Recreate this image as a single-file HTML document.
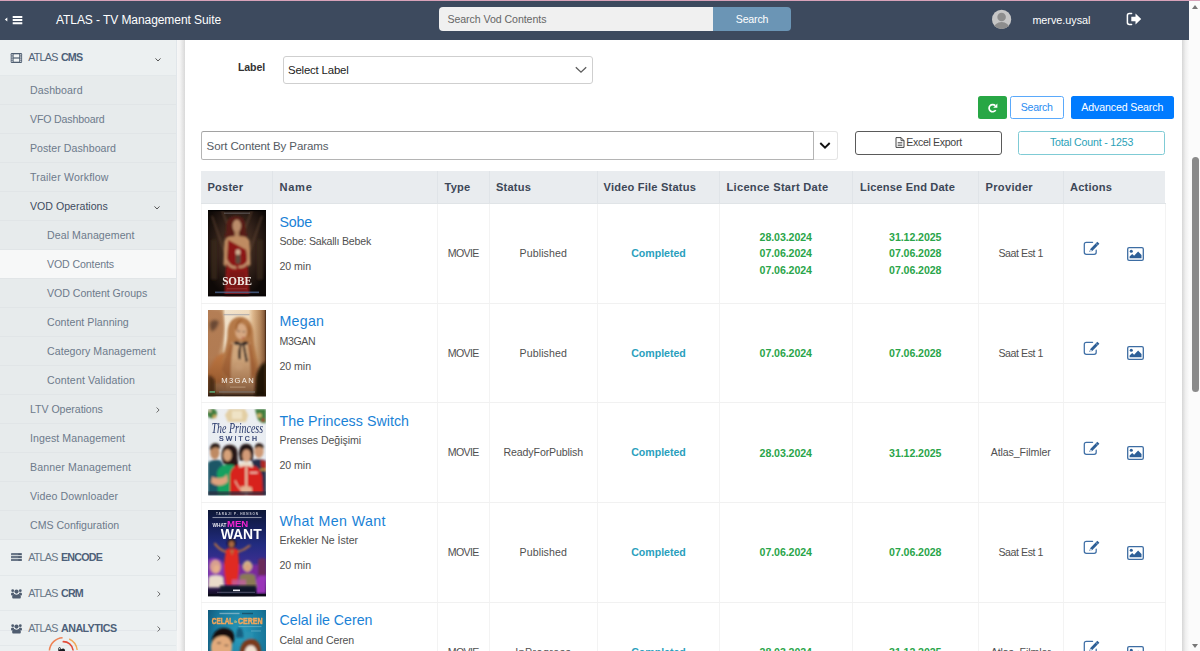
<!DOCTYPE html>
<html lang="en">
<head>
<meta charset="utf-8">
<title>ATLAS - TV Management Suite</title>
<style>
*{box-sizing:border-box;}
html,body{margin:0;padding:0;width:1200px;height:651px;overflow:hidden;background:#fff;
  font-family:"Liberation Sans",sans-serif;color:#444;}
.abs{position:absolute;}
#topline{position:absolute;left:0;top:0;width:1200px;height:1px;background:#d8a2b9;z-index:20;}
#hdr{position:absolute;left:0;top:0;width:1189px;height:40px;background:#3d4a5e;color:#fff;z-index:10;}
#hdr .title{position:absolute;left:56px;top:11px;font-size:12px;line-height:18px;white-space:nowrap;}
#hdr .sin{position:absolute;left:439px;top:7px;width:274px;height:24px;background:#f0f0f0;border-radius:4px 0 0 4px;
  color:#666;font-size:10.6px;line-height:24px;padding-left:8.4px;white-space:nowrap;}
#hdr .sbtn{position:absolute;left:713px;top:7px;width:78px;height:24px;background:#6b95b5;border-radius:0 4px 4px 0;
  color:#fff;font-size:10.6px;line-height:24px;text-align:center;}
#hdr .user{position:absolute;left:1032.4px;top:12px;font-size:10.8px;line-height:16px;white-space:nowrap;}
#side{position:absolute;left:0;top:40px;width:177px;height:611px;background:#ecf0f1;overflow:hidden;}
#sbr{position:absolute;left:176px;top:0;width:1px;height:590px;background:#e1e6ea;z-index:3;}
#menu{position:absolute;left:0;top:0;width:176px;height:611px;overflow:hidden;}
.top.h36{height:36px;}
#sfoot{position:absolute;left:0;top:590px;width:177px;height:21px;pointer-events:none;}
#sfl{position:absolute;left:0;top:590px;width:177px;height:1px;background:#e3e7ea;}
#gap{position:absolute;left:177px;top:40px;width:8px;height:611px;background:linear-gradient(90deg,#f7f7f7 0%,#f3f3f3 40%,#d9d9d9 100%);}
#main{position:absolute;left:185px;top:40px;width:997px;height:611px;background:#fff;overflow:hidden;}
#rsh{position:absolute;left:1182px;top:40px;width:7px;height:611px;background:linear-gradient(90deg,#d6d6d6 0%,#efefef 50%,#fafafa 100%);}
#sbar{position:absolute;left:1189px;top:1px;width:11px;height:650px;background:#fbfbfb;}
#sbar .thumb{position:absolute;left:3px;top:156px;width:7px;height:235px;border-radius:3.5px;background:#8a8a8a;}
#sbar .up{position:absolute;left:3px;top:4px;width:0;height:0;border-left:3px solid transparent;border-right:3px solid transparent;border-bottom:4px solid #777;}
#sbar .dn{position:absolute;left:3px;top:643px;width:0;height:0;border-left:3px solid transparent;border-right:3px solid transparent;border-top:4px solid #777;}

/* sidebar */
.top{position:relative;height:35px;background:transparent;border-bottom:1px solid #e3e8ea;color:#586a80;font-size:10.7px;line-height:34px;white-space:nowrap;}
.top .ta{position:absolute;left:28.3px;top:0;color:#687686;}
.top #aCMS{color:#506076;}
.top .tb{position:absolute;left:61px;top:0;color:#4d6079;}
.sub{position:relative;height:29px;background:#e7ebec;border-bottom:1px solid #e1e5e7;color:#6d7a8b;font-size:10.6px;line-height:28.6px;white-space:nowrap;}
.sub .tx{position:absolute;left:30px;top:0;}
.sub.l2 .tx{left:47px;}
.sub.sel{background:#f7f8f8;}
.sub.dark{color:#3f4c5f;}
.chev{position:absolute;left:154px;top:0;width:8px;height:100%;}

/* main content */
#ct{position:absolute;left:0;top:0;width:1182px;height:651px;overflow:hidden;z-index:5;}
.t{position:absolute;white-space:nowrap;line-height:14px;font-size:10.6px;}
.lbl{left:238px;top:60px;font-weight:bold;color:#333;font-size:10.6px;}
.selbox{position:absolute;left:283px;top:55.7px;width:309.6px;height:28.2px;border:1px solid #cfcfcf;border-radius:3px;background:#fff;}
.selbox .t{left:4px;top:6px;font-size:11.4px;color:#222;}
.btn{position:absolute;top:96px;height:23px;border-radius:2.5px;font-size:10.6px;line-height:22px;text-align:center;white-space:nowrap;}
.b-g{left:978px;width:29px;background:#28a745;}
.b-s{left:1010px;width:53.5px;border:1px solid #5aa9fb;color:#2a8df2;background:#fff;line-height:20px;}
.b-a{left:1071px;width:102.5px;background:#007bff;color:#fff;}
.sortin{position:absolute;left:201px;top:130.6px;width:612.5px;height:29px;border:1px solid #b4b4b4;border-top-color:#a2a2a2;border-radius:2.5px 0 0 2.5px;background:#fff;}
.sortin .t{left:4.6px;top:7px;font-size:11.5px;color:#555b63;}
.sortbtn{position:absolute;left:813.5px;top:130.6px;width:24.5px;height:29px;border:1px solid #e4e4e4;border-left:none;border-radius:0 3px 3px 0;background:#fff;}
.xls{position:absolute;left:855px;top:131px;width:146.5px;height:24px;border:1px solid #5a5a5a;border-radius:3px;background:#fff;color:#444;font-size:10.6px;line-height:21px;text-align:center;white-space:nowrap;}
.tot{position:absolute;left:1018px;top:131px;width:147px;height:24px;border:1px solid #7fcbd5;border-radius:2.5px;background:#fff;color:#2aa1b7;font-size:10.6px;line-height:21px;text-align:center;white-space:nowrap;}
table#tb{position:absolute;left:201px;top:171px;width:964px;border-collapse:collapse;table-layout:fixed;}
#tb th{height:32.5px;background:#e9ecef;color:#3d4757;font-size:11.1px;font-weight:bold;text-align:left;padding:0 0 1px 6.5px;border-right:1px solid #e0e4e8;border-bottom:1px solid #e0e4e7;white-space:nowrap;vertical-align:middle;}
#tb th:last-child{border-right:none;}
#tb th:nth-child(5){padding-left:5.5px;}
#tb th:nth-child(7){padding-left:7.5px;}
#tb td{height:99.7px;padding:0 0 1px 0;border-right:1px solid #f3f3f3;border-bottom:1px solid #f1f1f1;font-size:10.6px;color:#505050;text-align:center;vertical-align:middle;position:relative;white-space:nowrap;}
#tb td:first-child{box-shadow:inset 1px 0 0 #f6f6f6;}
#tb td.nm{text-align:left;vertical-align:top;}
#tb td.nm a{position:absolute;left:6.5px;top:8.5px;font-size:14.2px;line-height:18px;color:#1a82d6;text-decoration:none;}
#tb td.nm .s1{position:absolute;left:6.5px;top:30px;line-height:14px;}
#tb td.nm .s2{position:absolute;left:6.5px;top:55px;line-height:14px;}
#tb td.vs{color:#2a9fbd;font-weight:bold;}
#tb td.dt{color:#2aa54a;font-weight:bold;line-height:16.6px;padding-top:1.2px;}
.pst{position:absolute;left:7px;top:6.4px;width:58px;height:86.5px;display:block;}
#r1 .pst{top:6.4px;}#r2 .pst{top:6.35px;}#r3 .pst{top:6.1px;}#r4 .pst{top:7px;}#r5 .pst{top:7.3px;}
.ic1{position:absolute;left:19.5px;top:37.2px;width:17px;height:15px;}
.ic2{position:absolute;left:63px;top:42.8px;width:17px;height:14px;}
/*FIT*/
#hdr .title{letter-spacing:-0.073px;}
#hdr .sin{letter-spacing:-0.059px;}
#hdr .sbtn{letter-spacing:-0.196px;}
#hdr .user{letter-spacing:-0.018px;}
#m1{letter-spacing:0.097px;}
#m2{letter-spacing:-0.157px;}
#m3{letter-spacing:0.038px;}
#m4{letter-spacing:0.173px;}
#m5{letter-spacing:0.005px;}
#m6{letter-spacing:0.068px;}
#m7{letter-spacing:-0.109px;}
#m8{letter-spacing:-0.027px;}
#m9{letter-spacing:0.032px;}
#m10{letter-spacing:0.049px;}
#m11{letter-spacing:0.122px;}
#m12{letter-spacing:-0.043px;}
#m13{letter-spacing:0.080px;}
#m14{letter-spacing:0.120px;}
#m15{letter-spacing:0.113px;}
#m16{letter-spacing:-0.018px;}
#aCMS{letter-spacing:-0.776px;}
#aENCODE{letter-spacing:-0.776px;}
#aCRM{letter-spacing:-0.776px;}
#aANALYTICS{letter-spacing:-0.776px;}
#bCMS{letter-spacing:-0.850px;}
#bENCODE{letter-spacing:-0.756px;}
#bCRM{letter-spacing:-0.781px;}
#bANALYTICS{letter-spacing:-0.521px;}
.lbl{letter-spacing:-0.134px;}
.selbox .t{letter-spacing:-0.175px;}
.sortin .t{letter-spacing:-0.100px;}
.b-s{letter-spacing:-0.263px;}
.b-a{letter-spacing:-0.109px;}
.xls span{letter-spacing:-0.331px;}
.tot{letter-spacing:-0.188px;}
#tb th:nth-child(1){letter-spacing:0.203px;}
#tb th:nth-child(2){letter-spacing:0.695px;}
#tb th:nth-child(3){letter-spacing:0.230px;}
#tb th:nth-child(4){letter-spacing:0.182px;}
#tb th:nth-child(5){letter-spacing:0.195px;}
#tb th:nth-child(6){letter-spacing:0.288px;}
#tb th:nth-child(7){letter-spacing:0.157px;}
#tb th:nth-child(8){letter-spacing:0.311px;}
#tb th:nth-child(9){letter-spacing:0.188px;}
#r1 a{letter-spacing:-0.160px;}
#r2 a{letter-spacing:0.262px;}
#r3 a{letter-spacing:0.051px;}
#r4 a{letter-spacing:0.393px;}
#r5 a{letter-spacing:-0.004px;}
#r1 .s1{letter-spacing:-0.206px;}
#r2 .s1{letter-spacing:-0.378px;}
#r3 .s1{letter-spacing:-0.052px;}
#r4 .s1{letter-spacing:-0.017px;}
#r5 .s1{letter-spacing:-0.131px;}
#tb .s2{letter-spacing:-0.049px;}
#tb td:nth-child(3){letter-spacing:-0.628px;}
#r1 td:nth-child(4){letter-spacing:0.085px;}
#r2 td:nth-child(4){letter-spacing:0.085px;}
#r4 td:nth-child(4){letter-spacing:0.085px;}
#r3 td:nth-child(4){letter-spacing:-0.118px;}
#r5 td:nth-child(4){letter-spacing:0.477px;}
#tb td.vs{letter-spacing:-0.028px;}
#tb td.dt{letter-spacing:-0.073px;}
#r1 td:nth-child(8){letter-spacing:-0.419px;}
#r2 td:nth-child(8){letter-spacing:-0.419px;}
#r4 td:nth-child(8){letter-spacing:-0.419px;}
#r3 td:nth-child(8){letter-spacing:-0.095px;}
#r5 td:nth-child(8){letter-spacing:-0.095px;}
/*ENDFIT*/
</style>
</head>
<body>
<svg width="0" height="0" style="position:absolute">
<defs>
<!--POSTERS-->
<filter id="bl1" x="-10%" y="-10%" width="120%" height="120%"><feGaussianBlur stdDeviation="0.9"/></filter>
<filter id="bl2" x="-10%" y="-10%" width="120%" height="120%"><feGaussianBlur stdDeviation="1.8"/></filter>
<filter id="bl0" x="-10%" y="-10%" width="120%" height="120%"><feGaussianBlur stdDeviation="0.45"/></filter>
<radialGradient id="g1a" cx="50%" cy="42%" r="60%"><stop offset="0" stop-color="#5a3f2b"/><stop offset=".55" stop-color="#33221a"/><stop offset="1" stop-color="#0e0907"/></radialGradient>
<clipPath id="pc"><rect x="0" y="0" width="58" height="87"/></clipPath>
<symbol id="p1" viewBox="0 0 58 87">
  <g clip-path="url(#pc)">
  <rect width="58" height="87" fill="url(#g1a)"/>
  <g filter="url(#bl1)">
    <path d="M14 0L25 30M44 0L33 30M4 6L17 44M54 6L41 44" stroke="#6b4c36" stroke-width="1.800" opacity=".55"/>
    <rect x="3" y="30" width="6" height="40" fill="#3b2a20" opacity=".7"/><rect x="49" y="30" width="6" height="40" fill="#3b2a20" opacity=".7"/>
    <path d="M28 6c-6 0-9.500 4-9.500 10 0 5-1 9-2 12l4 2h15l4-2c-1-3-2-7-2-12 0-6-3.500-10-9.500-10z" fill="#581b14"/>
    <ellipse cx="28.800" cy="16" rx="4.300" ry="6.400" fill="#ba8c6a"/>
    <rect x="26.500" y="21" width="4.500" height="7" fill="#b0835f"/>
    <path d="M16.500 31c1.500-3 5-4.500 9-4.500h7c4 0 7.500 1.500 9 4.500l1 24-3 2-1.500-18-1 20H21l-1-20-1.500 18-3-2z" fill="#bf8c62"/>
    <path d="M20 30l18 10 2 20 1.500 27h-25L18 60l1.500-16z" fill="#8c1719"/>
    <path d="M21 62h16l2 25H19z" fill="#7c1316"/>
    <ellipse cx="30" cy="42.500" rx="2.500" ry="3.100" fill="#cfae92"/>
    <rect x="27.600" y="45" width="5" height="9" rx="1.500" fill="#5f4c3e"/>
    <path d="M18 50c2 5 6 8 10.500 8M41 50c-2 5-6 8-10.500 7" stroke="#c3946e" stroke-width="2.400" fill="none"/>
  </g>
  <rect x="0" y="0" width="58" height="1.200" fill="#050302"/>
  <rect x="0" y="84.500" width="58" height="2.500" fill="#0a0605" opacity=".9"/>
  <g filter="url(#bl0)">
  <text x="29" y="75.300" text-anchor="middle" font-family="Liberation Serif,serif" font-weight="bold" font-size="13.400" fill="#efe9e4" textLength="29.700" lengthAdjust="spacingAndGlyphs">SOBE</text>
  <rect x="16" y="2.600" width="26" height="1.200" fill="#8f9098" opacity=".45"/>
  <rect x="7" y="82" width="44" height="1.600" fill="#4f6a96" opacity=".75"/>
  <rect x="19" y="78.500" width="20" height="1.300" fill="#9a3a3a" opacity=".6"/>
  </g>
  </g>
</symbol>
<linearGradient id="g2a" x1="0" x2="1" y1="0" y2="0"><stop offset="0" stop-color="#b07c52"/><stop offset=".24" stop-color="#c9a077"/><stop offset=".3" stop-color="#f3e4cd"/><stop offset=".7" stop-color="#f1dcbd"/><stop offset=".78" stop-color="#dcb58a"/><stop offset=".9" stop-color="#b5875c"/><stop offset=".97" stop-color="#8a5e3c"/><stop offset="1" stop-color="#3a2010"/></linearGradient>
<linearGradient id="g2b" x1="0" x2="0" y1="0" y2="1"><stop offset="0" stop-color="#7a4422" stop-opacity="0"/><stop offset=".55" stop-color="#7a4422" stop-opacity=".05"/><stop offset=".78" stop-color="#74401f" stop-opacity=".4"/><stop offset=".94" stop-color="#55301a" stop-opacity=".65"/><stop offset="1" stop-color="#140a05" stop-opacity=".95"/></linearGradient>
<symbol id="p2" viewBox="0 0 58 87">
  <g clip-path="url(#pc)">
  <rect width="58" height="87" fill="url(#g2a)"/>
  <g filter="url(#bl2)">
    <path d="M0 0h13c3 9 4 18 2 28-2 12-7 22-9 34H0z" fill="#b47e54"/>
    <path d="M2 12c3-3 7-3 9 0-1 4-3 8-7 10-2-3-3-6-2-10z" fill="#6a4a36"/>
    <path d="M6 50c4-6 10-8 14-6v30H0V62z" fill="#bb7440"/>
  </g>
  <g filter="url(#bl1)">
    <path d="M32 7c-9 0-12.500 8-12.500 17 0 12-5.500 20-5.500 36l2 27h34l1-24c0-14-5.500-24-5.500-38 0-10-4.500-18-13.500-18z" fill="#b67a48"/>
    <path d="M22 34c3-3 17-3 21 0l5 53H16z" fill="#d3aa80"/>
    <path d="M14 60c2-10 6-16 8-26l3 0c-1 12-3 22-2 40zM48 60c-1-10-4-16-5-26l-3 0c1 12 3 22 3 40z" fill="#a8683a"/>
    <ellipse cx="33" cy="21.500" rx="5.800" ry="8" fill="#d9aa84"/>
    <path d="M27.500 19c0-7 4-10 8-10-5 3-6 7-6.500 13zM38.500 14c2.500 4 2.500 10 1 15 4-5 3.500-12-1-15z" fill="#a0602e"/>
    <rect x="29.500" y="20.800" width="2.600" height="1.200" fill="#6a5a50"/><rect x="34.600" y="21.200" width="2.400" height="1.200" fill="#6a5a50"/>
    <ellipse cx="35" cy="27.800" rx="1.300" ry=".700" fill="#b03030"/>
    <path d="M33 33.500c-3-2.500-6-2.500-7.500-.5 1 2.500 4.500 2.500 7.500 1.500 3 1 6.500 1 7.500-1.500-1.500-2-4.500-2-7.500.5z" fill="#1b181b"/>
    <path d="M32 34.500c-1.500 5-2.500 9-1.500 15l2.200 0c-.2-5 0-10 1-15zM34.500 34.500c1 6 2 12 3.200 18l2.200-1c-1.200-6-2.400-11-3.400-17z" fill="#1b181b"/>
    <ellipse cx="31" cy="58" rx="4" ry="3" fill="#d9b088"/>
  </g>
  <rect width="58" height="87" fill="url(#g2b)"/>
  <path d="M58 52c-5 2-9 8-10 16l-1 19h11z" fill="#170c06" opacity=".9" filter="url(#bl2)"/>
  <path d="M0 66c3 0 6 2 7 6v15H0z" fill="#3a2010" opacity=".8" filter="url(#bl2)"/>
  <g filter="url(#bl0)">
  <text x="29.500" y="73.400" text-anchor="middle" font-family="Liberation Sans,sans-serif" font-size="7.600" fill="#f6f2ec" textLength="32.500" lengthAdjust="spacing">M3GAN</text>
  <rect x="15.500" y="4" width="26" height="1.300" fill="#8a90a0" opacity=".55"/>
  <rect x="22" y="77" width="15.500" height="1.100" fill="#c0a080" opacity=".7"/>
  <rect x="11" y="81.700" width="36" height="1.500" fill="#7a7068" opacity=".8"/>
  <rect x="1.500" y="81.500" width="5.500" height="1.800" fill="#5a9a6a"/>
  </g>
  </g>
</symbol>

<linearGradient id="g3a" x1="0" x2="0" y1="0" y2="1"><stop offset="0" stop-color="#eceef0"/><stop offset=".4" stop-color="#e9edf2"/><stop offset="1" stop-color="#dfe4ea"/></linearGradient>
<symbol id="p3" viewBox="0 0 58 87">
  <g clip-path="url(#pc)">
  <rect width="58" height="87" fill="url(#g3a)"/>
  <g filter="url(#bl1)">
    <path d="M21 0h16l3 6-2 7H20l-3-7z" fill="#e3cfa4"/>
    <path d="M24 2h10v8H24z" fill="#efe3c6"/>
    <circle cx="4" cy="4.500" r="5" fill="#3f7d3c"/><circle cx="6.500" cy="7.500" r="2" fill="#c9a85a"/><circle cx="2" cy="2" r="1.500" fill="#d8c8a0"/>
    <path d="M47 0h11v14c-4 1-8-2-9-6z" fill="#3f7d3c"/><circle cx="51.500" cy="6.500" r="2.300" fill="#d2b46a"/><circle cx="55" cy="11" r="1.600" fill="#b33"/>
  </g>
  <g filter="url(#bl0)">
  <text x="29.300" y="24.600" text-anchor="middle" font-family="Liberation Serif,serif" font-style="italic" font-size="15.500" fill="#27376a" textLength="51.500" lengthAdjust="spacingAndGlyphs">The Princess</text>
  <text x="30" y="32.300" text-anchor="middle" font-family="Liberation Sans,sans-serif" font-size="6.900" fill="#2d3c6e" stroke="#2d3c6e" stroke-width=".250" textLength="38" lengthAdjust="spacing">SWITCH</text>
  </g>
  <g filter="url(#bl1)">
    <!-- man left -->
    <path d="M0 54c3-3 9-4 13-2l4 8v27H0z" fill="#1b5666"/>
    <ellipse cx="6.800" cy="43.500" rx="4.700" ry="7" fill="#bf8a64"/>
    <path d="M2 42c-.5-6 3-8 6-7.500 3 0 4.500 3 4 6-3-3-6-3-10 1.500z" fill="#2a1b15"/>
    <!-- man right -->
    <path d="M44 52c4-2 9-2 14 0v35H44z" fill="#252f4a"/>
    <path d="M53 51l5 2v9l-5-4z" fill="#b02a22"/><rect x="52" y="60" width="6" height="2" fill="#c9a040"/>
    <ellipse cx="51" cy="42.500" rx="4.600" ry="6.800" fill="#cf9a76"/>
    <path d="M46.500 40c0-5 4-6.500 7-5 2 1 2.500 3 2 5-3-2.500-6-2.500-9 0z" fill="#2a1c15"/>
    <!-- woman green -->
    <path d="M13.500 47c0-8 4-12 9-11 5 0 8 5 7 12 0 4 1 7 1 10h-6l-9-3c-1-3-2-5-2-8z" fill="#271813"/>
    <path d="M9 64c1-5 5-8 10-8h6c3 2 4 6 4 10l-1 21H10z" fill="#18a060"/>
    <ellipse cx="19.500" cy="46.500" rx="4.200" ry="6" fill="#d7a27a"/>
    <path d="M4 68c5 3 13 2 15-3l1 8c-5 5-12 5-17 1z" fill="#dfa27e"/>
    <!-- woman red -->
    <path d="M31 45c0-7 3-10 7.500-10 4.500 0 7.500 4 7 10l-1 7H32z" fill="#241519"/>
    <path d="M22 66c1-6 5-10 10-10h10c6 1 11 5 12 12l1 19H22z" fill="#d8211c"/>
    <ellipse cx="38.500" cy="46.800" rx="4.300" ry="6.400" fill="#d29b78"/>
    <path d="M31 56c3-4 11-4 14 0l-.5 3c-4-2-9-2-13 0z" fill="#ebdcc8"/>
    <rect x="37.400" y="58" width="1.800" height="28" fill="#e8d4b8"/>
    <rect x="41.700" y="63.500" width="8" height="1.300" fill="#f2e6d4"/>
    <path d="M27 72c2 5 5 9 9 12" stroke="#e8c0a8" stroke-width="1.200" fill="none"/>
    <path d="M33 78c3-1 8-1 11 1v5H33z" fill="#e4b090"/>
  </g>
  <rect x="0" y="83" width="58" height="4" fill="#2b2c3c" opacity=".8" filter="url(#bl1)"/>
  </g>
</symbol>
<linearGradient id="g4a" x1="0" x2="0" y1="0" y2="1"><stop offset="0" stop-color="#0d1736"/><stop offset=".2" stop-color="#16205a"/><stop offset=".4" stop-color="#222c80"/><stop offset=".6" stop-color="#3a2e90"/><stop offset=".8" stop-color="#6a36a2"/><stop offset=".9" stop-color="#2a1a4a"/><stop offset="1" stop-color="#0c0a1a"/></linearGradient>
<symbol id="p4" viewBox="0 0 58 87">
  <g clip-path="url(#pc)">
  <rect width="58" height="87" fill="url(#g4a)"/>
  <g filter="url(#bl1)">
    <rect x="0" y="55" width="58" height="22" fill="#7a2c9c"/>
    <path d="M0 50c5-3 12-2 15 3v24H0z" fill="#8a3cb0"/>
    <path d="M58 66c-5-1-9 1-10 6v12h10z" fill="#9a34b8"/>
    <path d="M50 50c3-2 6-2 8 0v16h-8z" fill="#6a2a5a"/>
    
    <!-- woman in red -->
    <path d="M18 42c-4-1-8-4-11-8M30 42c4-1 8-3 11.500-6" stroke="#b06e42" stroke-width="2.200" fill="none" stroke-linecap="round"/>
    <path d="M18 40c2-2 10-2 12 0l1 14c0 8-1 15-2 22H18c-1-8-2-15-2-22z" fill="#e02a20"/>
    <path d="M22 40l2 6 2-6z" fill="#b06e42"/>
    <ellipse cx="23.500" cy="33.500" rx="4.400" ry="5.200" fill="#241420"/>
    <ellipse cx="23.500" cy="34.500" rx="2.600" ry="3.400" fill="#a9683f"/>
    <!-- blonde left -->
    <ellipse cx="7.500" cy="57" rx="5.500" ry="7" fill="#d8a090"/>
    <ellipse cx="8.500" cy="59" rx="3" ry="3.800" fill="#e6b08c"/>
    <path d="M1 68c3-3 11-3 14 0l1 10H0z" fill="#e9dccb"/>
    <!-- man right -->
    <ellipse cx="39.500" cy="56.500" rx="4.600" ry="5.600" fill="#cdb08a"/>
    <ellipse cx="39.500" cy="58" rx="3" ry="3.800" fill="#d9a37e"/>
    <path d="M32 66c3-3 12-3 15 0l2 12H31z" fill="#8a7a56"/>
    <path d="M24 70h14v6H24z" fill="#c060a0" opacity=".8"/>
  </g>
  <path d="M12 76h36v11H12z" fill="#0e1428" opacity=".9" filter="url(#bl1)"/><rect x="0" y="84.500" width="58" height="2.500" fill="#0a0a16" opacity=".9"/>
  <g filter="url(#bl0)">
  <text x="29" y="5.400" text-anchor="middle" font-family="Liberation Sans,sans-serif" font-weight="bold" font-size="3.100" fill="#c6c8d4" textLength="42" lengthAdjust="spacing">TARAJI P. HENSON</text>
  <rect x="4.500" y="7" width="49" height="1.100" fill="#b8bccc" opacity=".7"/>
  <text x="4.600" y="17.200" font-family="Liberation Sans,sans-serif" font-weight="bold" font-size="4.800" fill="#e8e8f0" textLength="13.800" lengthAdjust="spacingAndGlyphs">WHAT</text>
  <text x="19" y="17.500" font-family="Liberation Sans,sans-serif" font-weight="bold" font-size="9.800" fill="#f024d0" textLength="21.300" lengthAdjust="spacingAndGlyphs">MEN</text>
  <text x="12.700" y="28.800" font-family="Liberation Sans,sans-serif" font-weight="bold" font-size="14.200" fill="#fff" textLength="41" lengthAdjust="spacingAndGlyphs">WANT</text>
  <rect x="25" y="80" width="7" height="1.600" fill="#e8e8f0"/>
  <rect x="9" y="82.300" width="38" height=".9" fill="#6a6a86" opacity=".8"/>
  </g>
  </g>
</symbol>
<radialGradient id="g5a" cx="55%" cy="30%" r="75%"><stop offset="0" stop-color="#2a9cbc"/><stop offset=".6" stop-color="#18769a"/><stop offset="1" stop-color="#0c4668"/></radialGradient>
<symbol id="p5" viewBox="0 0 58 87">
  <g clip-path="url(#pc)">
  <rect width="58" height="87" fill="url(#g5a)"/>
  <g filter="url(#bl1)">
    <path d="M28 28c0-6 1-10 3.500-10.500 2.500 0 4 4 4 10.500z" fill="#165f80"/>
    <path d="M37 22h8v14h-8z" fill="#2a94b4" opacity=".7"/>
    <!-- man -->
    <path d="M4 34c-1-9 4-16 12-16 7 0 12 5 10 13-2 3-3 6-3 9H6z" fill="#17110f"/>
    <path d="M3 36c1-6 6-10 12-10 5 0 8 4 9 9 0 6-1 12-4 18H6c-2-5-3-11-3-17z" fill="#e2aa7c"/>
    <rect x="9" y="32.500" width="4" height="1.300" fill="#6a5040"/><rect x="16.500" y="35" width="3.800" height="1.300" fill="#6a5040"/>
    <!-- woman -->
    <path d="M32 45c-1-9 4-16 11-16s11 7 10 16v20H33z" fill="#7a3b1c"/>
    <ellipse cx="42.800" cy="44" rx="6.300" ry="8.500" fill="#f0e1d2"/>
    <path d="M0 60h58v27H0z" fill="#15607f"/>
  </g>
  <g filter="url(#bl0)">
  <rect x="11.500" y="2.800" width="20" height="1.400" fill="#c8d8e0" opacity=".5"/><rect x="34" y="2.800" width="11" height="1.400" fill="#1a2a3a" opacity=".5"/>
  <text x="3.800" y="13.900" font-family="Liberation Sans,sans-serif" font-weight="bold" font-size="9.200" fill="#f2a55a" stroke="#f2a55a" stroke-width=".550" textLength="21.500" lengthAdjust="spacingAndGlyphs">CELAL</text>
  <text x="25.800" y="12.600" font-family="Liberation Sans,sans-serif" font-weight="bold" font-size="2.600" fill="#d8c070" textLength="3.600" lengthAdjust="spacingAndGlyphs">ile</text>
  <text x="30" y="13.900" font-family="Liberation Sans,sans-serif" font-weight="bold" font-size="9.200" fill="#f2a55a" stroke="#f2a55a" stroke-width=".550" textLength="24.600" lengthAdjust="spacingAndGlyphs">CEREN</text>
  <rect x="30.500" y="16" width="23" height="1.200" fill="#8ec8d8" opacity=".45"/><rect x="43" y="20.500" width="10" height="1.200" fill="#8ec8d8" opacity=".4"/>
  </g>
  </g>
</symbol>

<!--/POSTERS-->
<symbol id="i-edit" viewBox="0 0 17 15">
  <path d="M9.6 1.3H3.4C2.1 1.3 1.3 2.1 1.3 3.4v7.9c0 1.3.8 2.1 2.1 2.1h7.7c1.3 0 2.1-.8 2.1-2.1V9.2" fill="none" stroke="#3f6fa6" stroke-width="1.25" stroke-linecap="round"/>
  <path d="M14.300 .700l2.100 2.100-7.100 7.100-3 1 1-3z" fill="#2d5f97"/><path d="M12.900 2.500l1.900 1.900" stroke="#dfe8f2" stroke-width=".500"/>
  <path d="M7.6 8.6l1.5 1.5-2.2.8z" fill="#fff"/>
</symbol>
<symbol id="i-pic" viewBox="0 0 17 14">
  <rect x=".7" y=".7" width="15.6" height="12.6" rx="1.4" fill="#fff" stroke="#3d6da3" stroke-width="1.3"/>
  <circle cx="4.3" cy="4.3" r="1.55" fill="#2d5f97"/>
  <path d="M2.6 11.3V9.5l2.6-2.4 1.9 1.7 4-4.2 3.4 3.4v3.3z" fill="#2d5f97"/>
</symbol>
</defs>
</svg>
<div id="topline"></div>
<div id="hdr">
  <svg class="abs" style="left:0;top:0" width="40" height="40" viewBox="0 0 40 40"><path d="M4.8 19.6l2.5-2v4z" fill="#fff"/><path d="M12.7 16h9.6v2h-9.6zM12.7 19.1h9.6v2h-9.6zM12.7 22.2h9.6v2h-9.6z" fill="#fff"/></svg>
  <svg class="abs" style="left:991px;top:9px" width="21" height="21" viewBox="0 0 21 21"><defs><clipPath id="avc"><circle cx="10.6" cy="10.4" r="9.6"/></clipPath></defs><circle cx="10.6" cy="10.4" r="9.6" fill="#c6c6c6"/><g clip-path="url(#avc)" fill="#8d8d8d"><circle cx="10.6" cy="8" r="4.3"/><ellipse cx="10.6" cy="19.6" rx="8" ry="6.6"/></g></svg>
  <svg class="abs" style="left:1125px;top:11px" width="18" height="16" viewBox="0 0 18 16"><path d="M6.6 2.6H4.3C3 2.6 2.4 3.3 2.4 4.5v7c0 1.2.6 1.9 1.9 1.9h2.3" fill="none" stroke="#fff" stroke-width="1.5" stroke-linecap="round"/><path d="M6.3 5.8h4.2V2.6L16.2 8l-5.7 5.4v-3.2H6.3z" fill="#fff"/></svg>
  <div class="title">ATLAS - TV Management Suite</div>
  <div class="sin">Search Vod Contents</div>
  <div class="sbtn">Search</div>
  <div class="user">merve.uysal</div>
</div>
<div id="side">
  <div id="sbr"></div>
  <div id="sfl"></div>
  <div id="menu">
    <div class="top h36"><svg class="abs" style="left:10px;top:12px" width="13" height="12" viewBox="0 0 13 12"><rect x=".7" y="1.1" width="11.4" height="9.8" rx="1.2" fill="#4f5e71"/><rect x="3.6" y="2.3" width="5.6" height="3.1" fill="#f1f4f5"/><rect x="3.6" y="6.6" width="5.6" height="3.1" fill="#f1f4f5"/><g fill="#dfe4e8"><rect x="1.5" y="2.2" width="1.2" height="1.3"/><rect x="1.5" y="4.4" width="1.2" height="1.3"/><rect x="1.5" y="6.5" width="1.2" height="1.3"/><rect x="1.5" y="8.6" width="1.2" height="1.3"/><rect x="10.1" y="2.2" width="1.2" height="1.3"/><rect x="10.1" y="4.4" width="1.2" height="1.3"/><rect x="10.1" y="6.5" width="1.2" height="1.3"/><rect x="10.1" y="8.6" width="1.2" height="1.3"/></g></svg><svg class="abs" style="left:153.5px;top:16.5px" width="8" height="6" viewBox="0 0 8 6"><path d="M1.500 1.400L4 4 6.500 1.400" fill="none" stroke="#555" stroke-width="1"/></svg><span class="ta" id="aCMS">ATLAS </span><b class="tb" id="bCMS">CMS</b></div>
    <div class="sub"><span class="tx" id="m1">Dashboard</span></div>
    <div class="sub"><span class="tx" id="m2">VFO Dashboard</span></div>
    <div class="sub"><span class="tx" id="m3">Poster Dashboard</span></div>
    <div class="sub"><span class="tx" id="m4">Trailer Workflow</span></div>
    <div class="sub dark"><svg class="abs" style="left:153px;top:13px" width="8" height="6" viewBox="0 0 8 6"><path d="M1.500 1.400L4 4 6.500 1.400" fill="none" stroke="#555" stroke-width="1"/></svg><span class="tx" id="m5">VOD Operations</span></div>
    <div class="sub l2"><span class="tx" id="m6">Deal Management</span></div>
    <div class="sub l2 sel"><span class="tx" id="m7">VOD Contents</span></div>
    <div class="sub l2"><span class="tx" id="m8">VOD Content Groups</span></div>
    <div class="sub l2"><span class="tx" id="m9">Content Planning</span></div>
    <div class="sub l2"><span class="tx" id="m10">Category Management</span></div>
    <div class="sub l2"><span class="tx" id="m11">Content Validation</span></div>
    <div class="sub"><svg class="abs" style="left:155px;top:10.5px" width="6" height="8" viewBox="0 0 6 8"><path d="M1.600 1.500L4.100 4 1.600 6.500" fill="none" stroke="#6a6a6a" stroke-width="1"/></svg><span class="tx" id="m12">LTV Operations</span></div>
    <div class="sub"><span class="tx" id="m13">Ingest Management</span></div>
    <div class="sub"><span class="tx" id="m14">Banner Management</span></div>
    <div class="sub"><span class="tx" id="m15">Video Downloader</span></div>
    <div class="sub"><span class="tx" id="m16">CMS Configuration</span></div>
    <div class="top h36"><svg class="abs" style="left:10px;top:12px" width="13" height="10" viewBox="0 0 13 10"><g fill="#6a7788"><rect x="1" y="1.1" width="11" height="2.2" rx=".3"/><rect x="1" y="4" width="11" height="2.2" rx=".3"/><rect x="1" y="6.9" width="11" height="2.2" rx=".3"/></g><g fill="#39475a"><rect x="8.3" y="1.8" width="2.6" height=".8"/><rect x="8.3" y="4.7" width="2.6" height=".8"/><rect x="8.3" y="7.6" width="2.6" height=".8"/></g></svg><svg class="abs" style="left:155.500px;top:13.500px" width="6" height="8" viewBox="0 0 6 8"><path d="M1.600 1.500L4.100 4 1.600 6.500" fill="none" stroke="#6a6a6a" stroke-width="1"/></svg><span class="ta" id="aENCODE">ATLAS </span><b class="tb" id="bENCODE">ENCODE</b></div>
    <div class="top"><svg class="abs" style="left:10px;top:11.500px" width="13" height="11" viewBox="0 0 13 11"><g fill="#4f5d70"><circle cx="6.5" cy="3.6" r="2.1"/><path d="M3.1 10.6c-.6 0-.9-.4-.9-1V8.300c0-1.500 1-2.400 2.300-2.400.6.500 1.200.8 2 .8s1.400-.3 2-.8c1.300 0 2.300.9 2.300 2.400v1.300c0 .6-.3 1-.9 1z"/><circle cx="2.7" cy="2.700" r="1.400"/><circle cx="10.3" cy="2.700" r="1.400"/><path d="M1 6.300C1 5.200 1.600 4.500 2.500 4.500c.5.300 1 .4 1.500.3-.2.600 0 1.200.2 1.600-.8.100-1.400.500-1.800 1.100H1.800C1.300 7.500 1 7.100 1 6.300zM12 6.300c0-1.100-.6-1.800-1.500-1.800-.5.300-1 .4-1.500.3.200.6 0 1.200-.2 1.600.8.100 1.400.5 1.800 1.100h.6c.5 0 .8-.4.800-1.200z"/></g></svg><svg class="abs" style="left:155.500px;top:13.500px" width="6" height="8" viewBox="0 0 6 8"><path d="M1.600 1.500L4.100 4 1.600 6.500" fill="none" stroke="#6a6a6a" stroke-width="1"/></svg><span class="ta" id="aCRM">ATLAS </span><b class="tb" id="bCRM">CRM</b></div>
    <div class="top"><svg class="abs" style="left:10px;top:11.500px" width="13" height="11" viewBox="0 0 13 11"><g fill="#4f5d70"><circle cx="6.5" cy="3.6" r="2.1"/><path d="M3.1 10.6c-.6 0-.9-.4-.9-1V8.300c0-1.500 1-2.400 2.300-2.400.6.500 1.200.8 2 .8s1.400-.3 2-.8c1.300 0 2.300.9 2.300 2.400v1.300c0 .6-.3 1-.9 1z"/><circle cx="2.7" cy="2.700" r="1.400"/><circle cx="10.3" cy="2.700" r="1.400"/><path d="M1 6.300C1 5.200 1.600 4.500 2.500 4.500c.5.300 1 .4 1.500.3-.2.600 0 1.200.2 1.600-.8.100-1.400.500-1.800 1.100H1.800C1.300 7.500 1 7.100 1 6.300zM12 6.300c0-1.100-.6-1.800-1.500-1.800-.5.300-1 .4-1.500.3.200.6 0 1.200-.2 1.600.8.100 1.400.5 1.800 1.100h.6c.5 0 .8-.4.800-1.200z"/></g></svg><svg class="abs" style="left:155.500px;top:13.500px" width="6" height="8" viewBox="0 0 6 8"><path d="M1.600 1.500L4.100 4 1.600 6.500" fill="none" stroke="#6a6a6a" stroke-width="1"/></svg><span class="ta" id="aANALYTICS">ATLAS </span><b class="tb" id="bANALYTICS">ANALYTICS</b></div>
  </div>
  <div id="sfoot"><svg class="abs" style="left:45px;top:3px" width="36" height="18" viewBox="45 633 36 18">
<path d="M49.400 650.500A14 14 0 0 1 62.600 637.700" fill="none" stroke="#ee8355" stroke-width="1.500"/>
<path d="M69.200 639A14 14 0 0 1 77.200 650" fill="none" stroke="#f0a756" stroke-width="1.400"/>
<path d="M62.600 641.700A10 10 0 0 1 73.200 650.500" fill="none" stroke="#e04c3a" stroke-width="1.600"/>
<path d="M58.300 651v-2.600c.4-1.200 1.700-1.500 2.400-.5l.6 1.300c1.200-.9 2.700-.8 3.500.2l.3 1.600z" fill="#17191f"/>
<circle cx="59.700" cy="648.800" r=".800" fill="#dfe4e8"/>
</svg></div>
</div>
<div id="gap"></div>
<div id="main">
</div>
<div id="ct">
  <div class="t lbl">Label</div>
  <div class="selbox"><span class="t">Select Label</span><svg class="abs" style="left:290.300px;top:8px" width="14" height="10" viewBox="0 0 14 10"><path d="M1.800 2.300l5.200 4.900 5.200-4.900" fill="none" stroke="#5c5c5c" stroke-width="1.300"/></svg></div>
  <div class="btn b-g"><svg class="abs" style="left:8px;top:6px" width="13" height="12" viewBox="0 0 13 12"><path d="M9.700 8.100A3.600 3.600 0 1 1 9.300 3.700" fill="none" stroke="#fff" stroke-width="1.700"/><path d="M11.400 1.600v4.200H7.200z" fill="#fff"/></svg></div>
  <div class="btn b-s">Search</div>
  <div class="btn b-a">Advanced Search</div>
  <div class="sortin"><span class="t">Sort Content By Params</span></div>
  <div class="sortbtn"><svg class="abs" style="left:4px;top:9px" width="14" height="10" viewBox="0 0 14 10"><path d="M2.300 2l4.700 4.700L11.700 2" fill="none" stroke="#111" stroke-width="1.900"/></svg></div>
  <div class="xls"><svg style="vertical-align:-2px;margin-right:1.500px" width="10" height="11" viewBox="0 0 10 11"><path d="M1 .600h5l3 3v6.800H1z" fill="none" stroke="#444" stroke-width="1"/><path d="M6 .600v3h3" fill="none" stroke="#444" stroke-width=".900"/><path d="M2.700 5.500h4.600M2.700 7h4.600M2.700 8.500h4.600" stroke="#555" stroke-width=".800"/></svg><span>Excel Export</span></div>
  <div class="tot">Total Count - 1253</div>
<table id="tb"><colgroup><col style="width:71.5px"><col style="width:165px"><col style="width:51.5px"><col style="width:108.5px"><col style="width:122px"><col style="width:132.5px"><col style="width:126.5px"><col style="width:84.5px"><col style="width:102px"></colgroup>
<thead><tr><th>Poster</th><th>Name</th><th>Type</th><th>Status</th><th>Video File Status</th><th>Licence Start Date</th><th>License End Date</th><th>Provider</th><th>Actions</th></tr></thead>
<tbody>
<tr id="r1"><td><svg class="pst" viewBox="0 0 58 87" preserveAspectRatio="none"><use href="#p1"/></svg></td><td class="nm"><a>Sobe</a><span class="s1">Sobe: Sakallı Bebek</span><span class="s2">20 min</span></td><td>MOVIE</td><td>Published</td><td class="vs">Completed</td><td class="dt">28.03.2024<br>07.06.2024<br>07.06.2024</td><td class="dt">31.12.2025<br>07.06.2028<br>07.06.2028</td><td>Saat Est 1</td><td><svg class="ic1" viewBox="0 0 17 15"><use href="#i-edit"/></svg><svg class="ic2" viewBox="0 0 17 14"><use href="#i-pic"/></svg></td></tr>
<tr id="r2"><td><svg class="pst" viewBox="0 0 58 87" preserveAspectRatio="none"><use href="#p2"/></svg></td><td class="nm"><a>Megan</a><span class="s1">M3GAN</span><span class="s2">20 min</span></td><td>MOVIE</td><td>Published</td><td class="vs">Completed</td><td class="dt">07.06.2024</td><td class="dt">07.06.2028</td><td>Saat Est 1</td><td><svg class="ic1" viewBox="0 0 17 15"><use href="#i-edit"/></svg><svg class="ic2" viewBox="0 0 17 14"><use href="#i-pic"/></svg></td></tr>
<tr id="r3"><td><svg class="pst" viewBox="0 0 58 87" preserveAspectRatio="none"><use href="#p3"/></svg></td><td class="nm"><a>The Princess Switch</a><span class="s1">Prenses Değişimi</span><span class="s2">20 min</span></td><td>MOVIE</td><td>ReadyForPublish</td><td class="vs">Completed</td><td class="dt">28.03.2024</td><td class="dt">31.12.2025</td><td>Atlas_Filmler</td><td><svg class="ic1" viewBox="0 0 17 15"><use href="#i-edit"/></svg><svg class="ic2" viewBox="0 0 17 14"><use href="#i-pic"/></svg></td></tr>
<tr id="r4"><td><svg class="pst" viewBox="0 0 58 87" preserveAspectRatio="none"><use href="#p4"/></svg></td><td class="nm"><a>What Men Want</a><span class="s1">Erkekler Ne İster</span><span class="s2">20 min</span></td><td>MOVIE</td><td>Published</td><td class="vs">Completed</td><td class="dt">07.06.2024</td><td class="dt">07.06.2028</td><td>Saat Est 1</td><td><svg class="ic1" viewBox="0 0 17 15"><use href="#i-edit"/></svg><svg class="ic2" viewBox="0 0 17 14"><use href="#i-pic"/></svg></td></tr>
<tr id="r5"><td><svg class="pst" viewBox="0 0 58 87" preserveAspectRatio="none"><use href="#p5"/></svg></td><td class="nm"><a>Celal ile Ceren</a><span class="s1">Celal and Ceren</span><span class="s2">20 min</span></td><td>MOVIE</td><td>InProgress</td><td class="vs">Completed</td><td class="dt">28.03.2024</td><td class="dt">31.12.2025</td><td>Atlas_Filmler</td><td><svg class="ic1" viewBox="0 0 17 15"><use href="#i-edit"/></svg><svg class="ic2" viewBox="0 0 17 14"><use href="#i-pic"/></svg></td></tr>
</tbody></table>
</div>
<div id="rsh"></div>
<div id="sbar"><div class="up"></div><div class="thumb"></div><div class="dn"></div></div>
</body>
</html>
